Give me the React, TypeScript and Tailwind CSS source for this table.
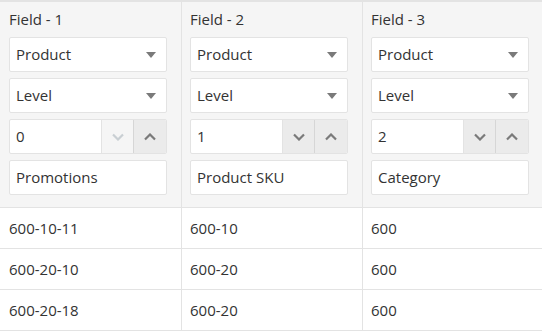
import React from 'react'

interface Column {
  title: string
  value: number
  name: string
  min?: boolean
}

const columns: Column[] = [
  { title: 'Field - 1', value: 0, name: 'Promotions', min: true },
  { title: 'Field - 2', value: 1, name: 'Product SKU' },
  { title: 'Field - 3', value: 2, name: 'Category' },
]

const rows = [
  ['600-10-11', '600-10', '600'],
  ['600-20-10', '600-20', '600'],
  ['600-20-18', '600-20', '600'],
]

function Caret() {
  return (
    <svg width="10" height="6" viewBox="0 0 10 6" className="shrink-0">
      <path d="M0 0 L10 0 L5 6 Z" fill="#7a7a7a" />
    </svg>
  )
}

function Chevron({ up, color }: { up?: boolean; color: string }) {
  return (
    <svg width="12" height="8" viewBox="0 0 12 8">
      <path
        d={up ? 'M1 6.5 L6 1.5 L11 6.5' : 'M1 1.5 L6 6.5 L11 1.5'}
        fill="none"
        stroke={color}
        strokeWidth="2.2"
      />
    </svg>
  )
}

function SelectBox({ label }: { label: string }) {
  return (
    <div className="flex h-[35px] w-[158px] items-center justify-between rounded-[2px] border border-[#e3e3e3] bg-white pl-[6px] pr-[10px]">
      <span>{label}</span>
      <Caret />
    </div>
  )
}

function NumberBox({ value, min }: { value: number; min?: boolean }) {
  return (
    <div className="flex h-[35px] w-[158px] overflow-hidden rounded-[2px] border border-[#e3e3e3] bg-white">
      <div className="flex flex-1 items-center pl-[6px]">{value}</div>
      <div
        className={`flex w-[32px] items-center justify-center border-l border-[#e3e3e3] ${min ? 'bg-[#f5f5f5]' : 'bg-[#ebebeb]'}`}
      >
        <Chevron color={min ? '#c9cfd3' : '#7a7a7a'} />
      </div>
      <div className="flex w-[33px] items-center justify-center border-l border-[#d6d6d6] bg-[#ebebeb]">
        <Chevron up color="#7a7a7a" />
      </div>
    </div>
  )
}

export default function App() {
  return (
    <div
      className="h-[333px] w-[542px] bg-white text-[15px] text-[#333]"
      style={{ fontFamily: '"Open Sans", sans-serif' }}
    >
      <div className="grid grid-cols-[181px_181px_1fr] border-t-2 border-[#e3e3e3]">
        {columns.map((col, i) => (
          <div
            key={col.title}
            className={`flex flex-col gap-[6px] border-b border-[#e3e3e3] bg-[#f5f5f5] pb-[12px] pt-[6px] ${i === 0 ? 'pl-[9px]' : 'border-l pl-[8px]'}`}
          >
            <div className="mb-[1px] h-[22px] leading-[22px]">{col.title}</div>
            <SelectBox label="Product" />
            <SelectBox label="Level" />
            <NumberBox value={col.value} min={col.min} />
            <div className="flex h-[35px] w-[158px] items-center rounded-[2px] border border-[#e3e3e3] bg-white pl-[6px]">
              {col.name}
            </div>
          </div>
        ))}
        {rows.map((row, r) =>
          row.map((cell, c) => (
            <div
              key={`${r}-${c}`}
              className={`flex h-[41px] items-center border-b border-[#e3e3e3] ${c === 0 ? 'pl-[9px]' : 'border-l pl-[8px]'}`}
            >
              {cell}
            </div>
          )),
        )}
      </div>
    </div>
  )
}
